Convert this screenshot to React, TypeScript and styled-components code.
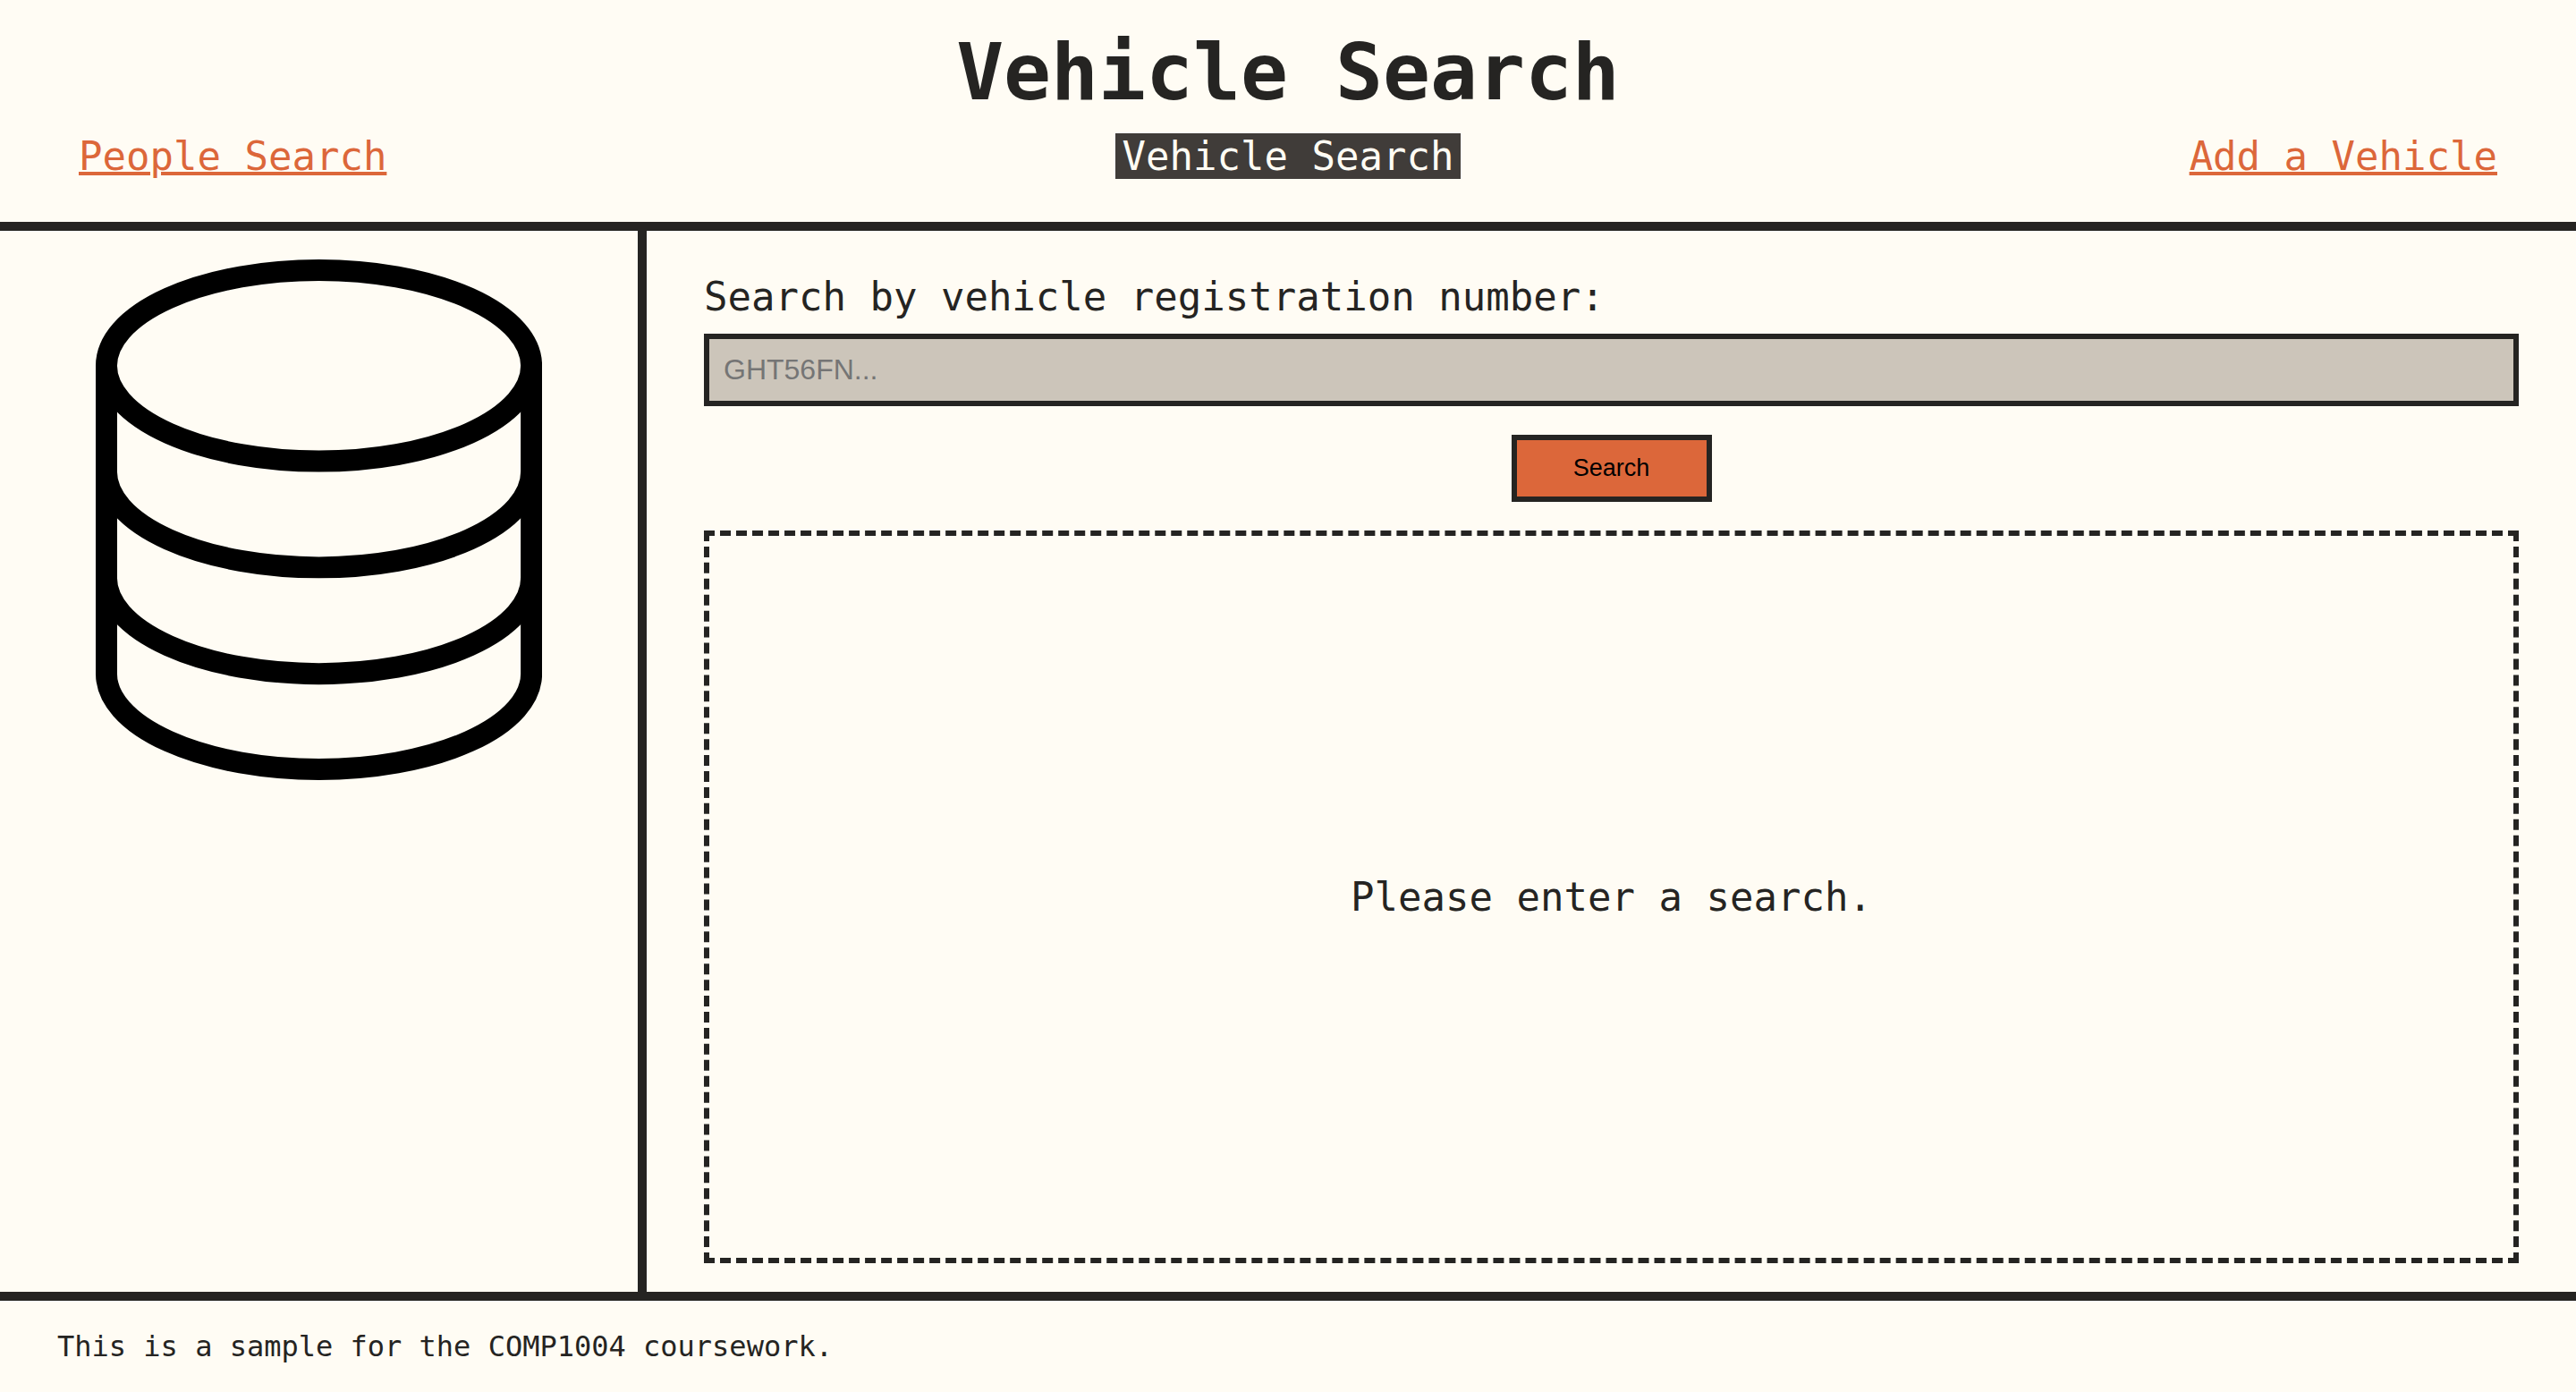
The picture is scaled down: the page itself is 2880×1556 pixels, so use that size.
import React, { useState } from "react";
import styled, { createGlobalStyle } from "styled-components";

const color = {
  paper: "#fffcf4",
  ink: "#252422",
  active: "#403c39",
  accent: "#dc673a",
  field: "#ccc5ba",
  placeholder: "#757575",
};

const mono = `"DejaVu Sans Mono", Menlo, monospace`;
const sans = `"Liberation Sans", Arial, sans-serif`;

const GlobalStyle = createGlobalStyle`
  *, *::before, *::after { box-sizing: border-box; }
  body {
    margin: 0;
    background: ${color.paper};
    color: ${color.ink};
    font-family: ${mono};
    font-size: 44px;
    line-height: 51px;
  }
`;

const Page = styled.div`
  display: flex;
  flex-direction: column;
  min-height: 100vh;
`;

const Header = styled.header`
  padding: 32px 80px 48px;
  border-bottom: 10px solid ${color.ink};
`;

const Title = styled.h1`
  margin: 0 0 20px;
  font-size: 88px;
  line-height: 97px;
  text-align: center;
`;

const NavList = styled.ul`
  display: flex;
  justify-content: space-between;
  margin: 0;
  padding: 0;
  list-style: none;
`;

const NavLink = styled.a<{ $active?: boolean }>`
  display: block;
  padding: 0 8px;
  color: ${(p) => (p.$active ? color.paper : color.accent)};
  background: ${(p) => (p.$active ? color.active : "transparent")};
  text-decoration: ${(p) => (p.$active ? "none" : "underline")};
  text-decoration-thickness: 4px;
`;

const Body = styled.div`
  display: flex;
  flex: 1;
`;

const Sidebar = styled.aside`
  flex: 0 0 calc(25% + 3px);
  padding: 32px 0;
  border-right: 10px solid ${color.ink};
`;

const DatabaseImage = styled.svg`
  display: block;
  width: 70%;
  margin: 0 auto;
`;

const Main = styled.main`
  display: flex;
  flex: 1;
  flex-direction: column;
  gap: 32px;
  padding: 48px 64px 32px;
`;

const SearchForm = styled.form`
  display: flex;
  flex-direction: column;
`;

const Label = styled.label`
  margin-bottom: 16px;
`;

const TextInput = styled.input`
  height: 81px;
  margin-bottom: 32px;
  padding: 0 16px;
  border: 6px solid ${color.ink};
  border-radius: 0;
  background: ${color.field};
  color: ${color.ink};
  font: 32px ${sans};

  &::placeholder {
    color: ${color.placeholder};
    opacity: 1;
  }
`;

const SubmitButton = styled.button`
  align-self: center;
  min-width: 224px;
  height: 75px;
  padding: 0 48px;
  border: 6px solid ${color.ink};
  border-radius: 0;
  background: ${color.accent};
  color: #000;
  font: 27px ${sans};
  cursor: pointer;
`;

const Results = styled.section`
  display: flex;
  flex: 1;
  align-items: center;
  justify-content: center;
  border: 6px dashed ${color.ink};
`;

const Message = styled.p`
  margin: 0;
`;

const Footer = styled.footer`
  padding: 32px 64px;
  border-top: 10px solid ${color.ink};
  font-size: 32px;
  line-height: 38px;
`;

const pages = [
  { name: "People Search", href: "#people" },
  { name: "Vehicle Search", href: "#vehicle" },
  { name: "Add a Vehicle", href: "#add" },
];

function Database() {
  return (
    <DatabaseImage viewBox="0 0 500 583" role="img" aria-label="Database">
      <g fill="none" stroke="#000" strokeWidth="24">
        <ellipse cx="250" cy="119" rx="238" ry="107" />
        <path d="M12 119V464A238 107 0 0 0 488 464V119" />
        <path d="M12 238A238 107 0 0 0 488 238" />
        <path d="M12 357A238 107 0 0 0 488 357" />
      </g>
    </DatabaseImage>
  );
}

export default function App() {
  const [registration, setRegistration] = useState("");

  return (
    <Page>
      <GlobalStyle />
      <Header>
        <Title>Vehicle Search</Title>
        <nav>
          <NavList>
            {pages.map(({ name, href }) => (
              <li key={href}>
                <NavLink href={href} $active={href === "#vehicle"}>
                  {name}
                </NavLink>
              </li>
            ))}
          </NavList>
        </nav>
      </Header>
      <Body>
        <Sidebar>
          <Database />
        </Sidebar>
        <Main>
          <SearchForm onSubmit={(event) => event.preventDefault()}>
            <Label htmlFor="rego">Search by vehicle registration number:</Label>
            <TextInput
              id="rego"
              type="text"
              placeholder="GHT56FN..."
              value={registration}
              onChange={(event) => setRegistration(event.target.value)}
            />
            <SubmitButton type="submit">Search</SubmitButton>
          </SearchForm>
          <Results>
            <Message>Please enter a search.</Message>
          </Results>
        </Main>
      </Body>
      <Footer>This is a sample for the COMP1004 coursework.</Footer>
    </Page>
  );
}
